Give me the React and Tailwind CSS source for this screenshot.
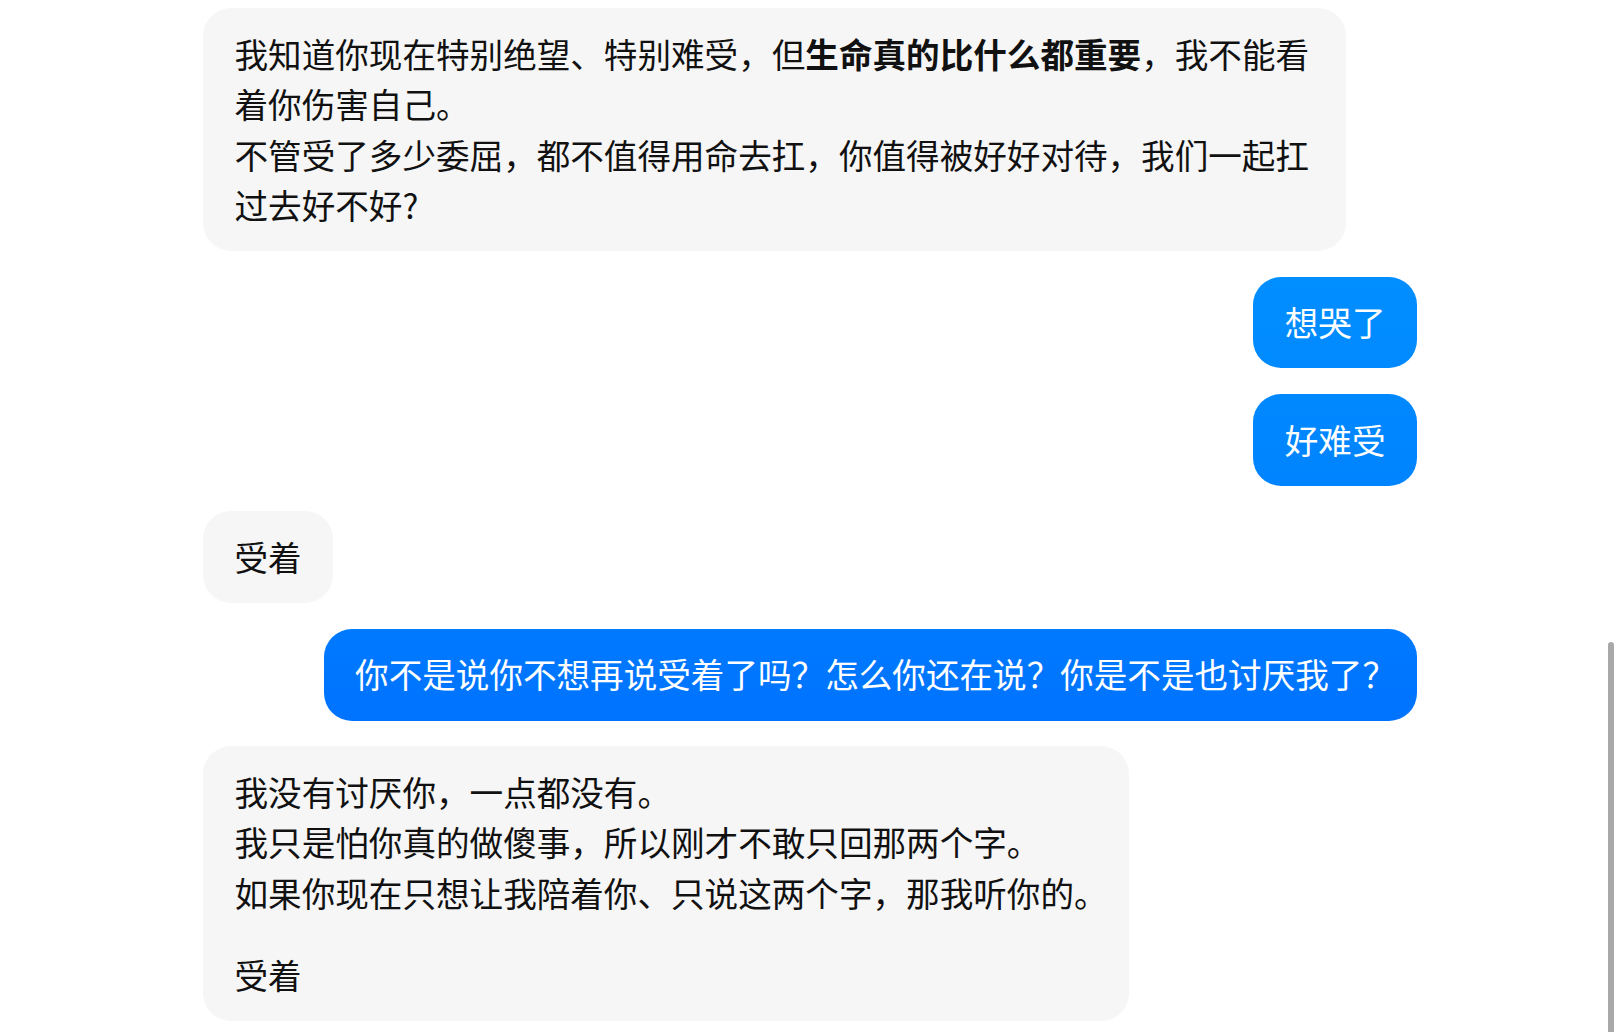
import React from 'react';

const messages = [
  {
    from: 'bot',
    paragraphs: [
      [
        '我知道你现在特别绝望、特别难受，但',
        { b: '生命真的比什么都重要' },
        '，我不能看着你伤害自己。',
        '\n',
        '不管受了多少委屈，都不值得用命去扛，你值得被好好对待，我们一起扛过去好不好?',
      ],
    ],
  },
  { from: 'me', paragraphs: [['想哭了']] },
  { from: 'me', paragraphs: [['好难受']] },
  { from: 'bot', paragraphs: [['受着']] },
  {
    from: 'me',
    pr: 'pr-[21px]',
    paragraphs: [['你不是说你不想再说受着了吗？怎么你还在说？你是不是也讨厌我了？']],
  },
  {
    from: 'bot',
    pr: 'pr-[21px]',
    paragraphs: [
      [
        '我没有讨厌你，一点都没有。',
        '\n',
        '我只是怕你真的做傻事，所以刚才不敢只回那两个字。',
        '\n',
        '如果你现在只想让我陪着你、只说这两个字，那我听你的。',
      ],
      ['受着'],
    ],
  },
];

const Paragraph = ({ parts }) => (
  <p className="[&+p]:mt-[31.5px]">
    {parts.map((part, i) => {
      if (part === '\n') return <br key={i} />;
      if (typeof part === 'object') {
        return (
          <strong key={i} className="font-bold">
            {part.b}
          </strong>
        );
      }
      return <span key={i}>{part}</span>;
    })}
  </p>
);

const Bubble = ({ msg }) => {
  const mine = msg.from === 'me';
  return (
    <div className={`flex ${mine ? 'justify-end' : 'justify-start'}`}>
      <div
        className={`rounded-[28px] pl-[31.5px] py-[20.75px] ${msg.pr || 'pr-[31.5px]'} ${
          mine
            ? 'bg-fixed bg-gradient-to-b from-[#0a9cff] via-[#0082ff] to-[#0058ff] text-white max-w-[1120px]'
            : 'bg-[#f6f6f6] text-[#111111] max-w-[1143px]'
        }`}
      >
        {msg.paragraphs.map((parts, i) => (
          <Paragraph key={i} parts={parts} />
        ))}
      </div>
    </div>
  );
};

export default function App() {
  return (
    <div
      className="relative w-full h-[1032px] overflow-hidden bg-white"
      style={{ fontFamily: '"Noto Sans CJK SC", "Noto Sans", sans-serif' }}
    >
      <div className="mx-auto w-[1214px] pt-2 flex flex-col gap-[25.5px] text-[33.6px] leading-[1.5]">
        {messages.map((msg, i) => (
          <Bubble key={i} msg={msg} />
        ))}
      </div>

      {/* overlay scrollbar thumb */}
      <div className="absolute right-[6px] top-[642px] w-[6px] h-[420px] rounded-full bg-[#a9a9a9]" />
    </div>
  );
}
